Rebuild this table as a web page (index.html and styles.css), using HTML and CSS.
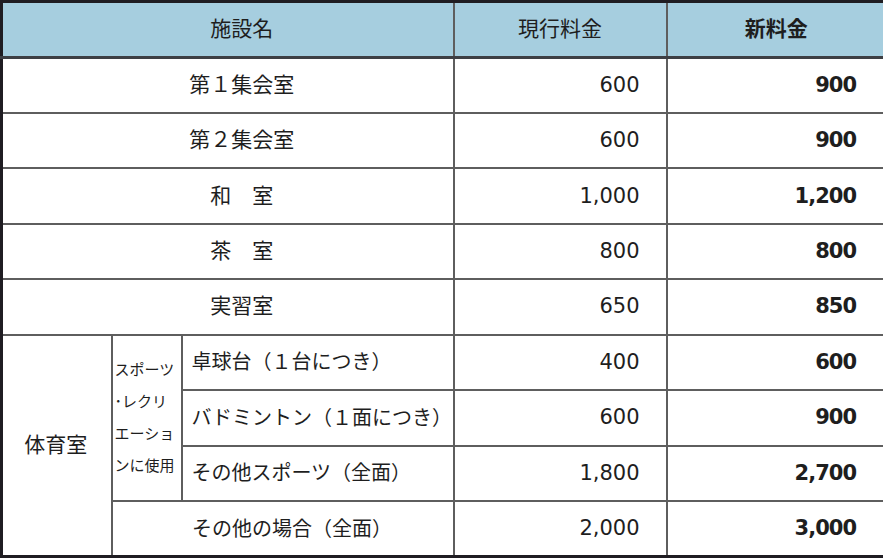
FILE: index.html
```html
<!DOCTYPE html>
<html lang="ja">
<head>
<meta charset="utf-8">
<link rel="stylesheet" href="styles.css">
</head>
<body>
<table class="fees">
  <colgroup>
    <col class="c1"><col class="c2"><col class="c3"><col class="c4"><col class="c5">
  </colgroup>
  <thead>
    <tr class="head">
      <th colspan="3" class="name">施設名</th>
      <th>現行料金</th>
      <th class="new">新料金</th>
    </tr>
  </thead>
  <tbody>
    <tr><td colspan="3" class="name">第１集会室</td><td class="num">600</td><td class="num new">900</td></tr>
    <tr><td colspan="3" class="name">第２集会室</td><td class="num">600</td><td class="num new">900</td></tr>
    <tr><td colspan="3" class="name">和　室</td><td class="num">1,000</td><td class="num new">1,200</td></tr>
    <tr><td colspan="3" class="name">茶　室</td><td class="num">800</td><td class="num new">800</td></tr>
    <tr><td colspan="3" class="name">実習室</td><td class="num">650</td><td class="num new">850</td></tr>
    <tr>
      <td rowspan="4" class="gym">体育室</td>
      <td rowspan="3" class="use"><span>スポーツ</span><span>･レクリ</span><span>エーショ</span><span>ンに使用</span></td>
      <td class="item">卓球台（１台につき）</td><td class="num">400</td><td class="num new">600</td>
    </tr>
    <tr><td class="item">バドミントン（１面につき）</td><td class="num">600</td><td class="num new">900</td></tr>
    <tr><td class="item">その他スポーツ（全面）</td><td class="num">1,800</td><td class="num new">2,700</td></tr>
    <tr><td colspan="2" class="name other">その他の場合（全面）</td><td class="num">2,000</td><td class="num new">3,000</td></tr>
  </tbody>
</table>
</body>
</html>
```
FILE: styles.css
```css
html, body {
  margin: 0;
  padding: 0;
  background: #ffffff;
}

.fees {
  width: 883px;
  height: 558px;
  border-collapse: collapse;
  table-layout: fixed;
  border: 3px solid #1f1d22;
  font-family: "DejaVu Sans", "Noto Sans CJK JP", sans-serif;
  font-size: 21px;
  color: #1e1e1e;
}

.c1 { width: 110px; }
.c2 { width: 70px; }
.c3 { width: 272px; }
.c4 { width: 213px; }
.c5 { width: 218px; }

.fees th,
.fees td {
  border: 2px solid #5e5e5e;
  padding: 0;
  vertical-align: middle;
  line-height: 1.2;
}

.head {
  height: 56px;
  background: #a6cedf;
}

.head th {
  font-weight: normal;
  text-align: center;
  border-bottom: 3px solid #3d3f44;
}

.head th.new {
  font-weight: bold;
  padding-left: 2px;
}

.head th.name {
  padding-left: 28px;
}

tbody tr {
  height: 55px;
}

td.name {
  text-align: center;
  padding-left: 28px;
}

td.name.other {
  font-size: 20px;
  padding-left: 19px;
}

td.num {
  text-align: right;
  padding-right: 26px;
}

td.num.new {
  font-weight: bold;
  letter-spacing: -1px;
  padding-right: 27px;
}

td.gym {
  text-align: center;
  padding-right: 2px;
}

td.use {
  font-size: 15px;
  padding-left: 2px;
  text-align: left;
}

td.use span {
  display: block;
  line-height: 32px;
  white-space: nowrap;
}

td.item {
  font-size: 20px;
  text-align: left;
  padding-left: 9px;
  white-space: nowrap;
}
```
